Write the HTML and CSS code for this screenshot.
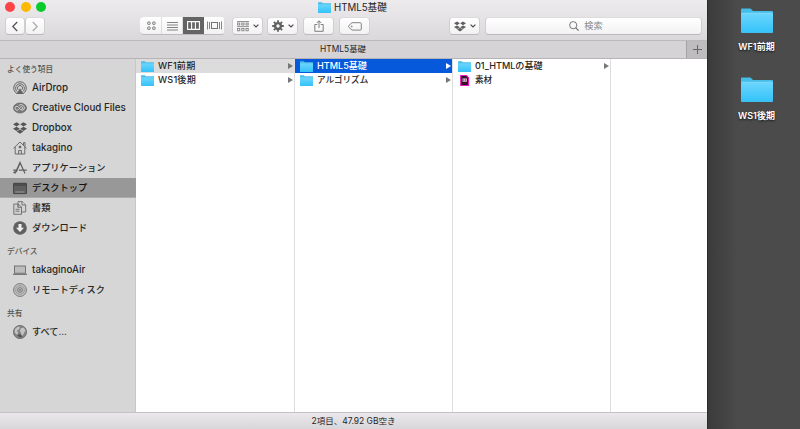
FILE: index.html
```html
<!DOCTYPE html>
<html lang="ja">
<head>
<meta charset="utf-8">
<title>HTML5基礎</title>
<link rel="stylesheet" href="styles.css">
</head>
<body>
<svg class="defs" width="0" height="0">
  <defs>
    <linearGradient id="blue" x1="0" y1="0" x2="0" y2="1"><stop offset="0" stop-color="#6ad5fc"/><stop offset="1" stop-color="#35c3fa"/></linearGradient>
    <symbol id="folder" viewBox="0 0 32 25" preserveAspectRatio="none"><path d="M0 24V1.5Q0 .5 1 .5H9.5L12 3H31Q32 3 32 4V24Q32 25 31 25H1Q0 25 0 24Z" fill="#45bde9"/><path d="M0 6H32V23.5Q32 24.3 31 24.3H1Q0 24.3 0 23.5Z" fill="url(#blue)"/><path d="M.3 5.3H31.7" stroke="#91e2ff" stroke-width=".9"/></symbol>
    <symbol id="dropbox" viewBox="0 0 14 12"><path d="M0 2.3 3.6.2 6.8 2.3 3.5 4.4ZM7.2 2.3 10.4.2 14 2.3 10.5 4.4ZM0 6.7 3.5 4.7 6.8 6.8 3.6 8.9ZM7.2 6.8 10.5 4.7 14 6.7 10.4 8.9ZM3.6 9.6 7 7.5 10.4 9.6 7 11.7Z"/></symbol>
    <symbol id="chev" viewBox="0 0 6 4"><path d="M.6.6 3 3 5.4.6" fill="none" stroke="#4c4c4c" stroke-width="1.2"/></symbol>
  </defs>
</svg>
<div class="desktop">
  <main class="window">
    <header class="toolbar">
      <div class="titlebar">
        <div class="lights"><i class="red"></i><i class="yellow"></i><i class="green"></i></div>
        <div class="title"><svg width="13" height="11"><use href="#folder"/></svg><span>HTML5基礎</span></div>
      </div>
      <div class="tools">
        <button class="btn nav"><svg width="8" height="11" viewBox="0 0 8 11"><path d="M6.2 1 1.8 5.5 6.2 10" fill="none" stroke="#505050" stroke-width="1.2"/></svg></button>
        <button class="btn nav forward"><svg width="8" height="11" viewBox="0 0 8 11"><path d="M1.8 1 6.2 5.5 1.8 10" fill="none" stroke="#aaa" stroke-width="1.2"/></svg></button>
        <div class="views">
          <span><svg width="9" height="10" viewBox="0 0 9 10" fill="none" stroke="#777" stroke-width="1"><rect x=".7" y="1" width="2.4" height="2.4" rx=".5"/><rect x="5.7" y="1" width="2.4" height="2.4" rx=".5"/><rect x=".7" y="6" width="2.4" height="2.4" rx=".5"/><rect x="5.7" y="6" width="2.4" height="2.4" rx=".5"/></svg></span>
          <span><svg width="11" height="10" viewBox="0 0 11 10"><path d="M0 1.5H11M0 4H11M0 6.5H11M0 9H11" stroke="#777" stroke-width=".9"/></svg></span>
          <span class="on"><svg width="13" height="9" viewBox="0 0 13 9"><path d="M.6.6H12.4V8.4H.6ZM4.6.6V8.4M8.4.6V8.4" fill="#666" stroke="#fff" stroke-width="1.1"/></svg></span>
          <span><svg width="15" height="9" viewBox="0 0 15 9" fill="none" stroke="#777"><rect x="4.5" y="1.5" width="6" height="6"/><path d="M.5.5V8.5M2.5 1V8M12.5 1V8M14.5.5V8.5" stroke-width=".9"/></svg></span>
        </div>
        <button class="btn menu arrange"><svg width="12" height="11" viewBox="0 0 12 11" fill="none" stroke="#777" stroke-width=".8"><path d="M0 .5H12M0 5.6H12"/><rect x=".6" y="2" width="2.2" height="2"/><rect x="4.8" y="2" width="2.2" height="2"/><rect x="9" y="2" width="2.2" height="2"/><rect x=".6" y="7.5" width="2.2" height="2.3"/><rect x="4.8" y="7.5" width="2.2" height="2.3"/><rect x="9" y="7.5" width="2.2" height="2.3"/></svg><svg width="6" height="4"><use href="#chev"/></svg></button>
        <button class="btn menu gear"><svg width="12" height="12" viewBox="0 0 12 12"><circle cx="6" cy="6" r="2.9" fill="none" stroke="#606060" stroke-width="2.4"/><path d="M6 .2V2.2M6 9.8V11.8M.2 6H2.2M9.8 6H11.8M1.9 1.9 3.3 3.3M8.7 8.7 10.1 10.1M1.9 10.1 3.3 8.7M8.7 3.3 10.1 1.9" stroke="#606060" stroke-width="1.8"/></svg><svg width="6" height="4"><use href="#chev"/></svg></button>
        <button class="btn menu share"><svg width="10" height="12" viewBox="0 0 10 12" fill="none" stroke="#707070" stroke-width=".9"><path d="M3.3 4.5H.8V11.3H9.2V4.5H6.7M5 8V.9M2.8 3 5 .8 7.2 3"/></svg></button>
        <button class="btn menu tag"><svg width="14" height="9" viewBox="0 0 14 9" fill="none" stroke="#777" stroke-width=".9"><path d="M4 .7H12.3Q13.3.7 13.3 1.7V7.1Q13.3 8.1 12.3 8.1H4L.8 5.2Q.3 4.4.8 3.6Z"/><circle cx="3.7" cy="4.4" r=".5"/></svg></button>
        <button class="btn menu drop"><svg width="12" height="11" fill="#606060"><use href="#dropbox"/></svg><svg width="6" height="4"><use href="#chev"/></svg></button>
        <div class="btn search"><svg width="10" height="10" viewBox="0 0 10 10" fill="none" stroke="#666"><circle cx="4.2" cy="4.2" r="3.6" stroke-width=".9"/><path d="M6.8 6.8 9.6 9.6" stroke-width="1.1"/></svg><span>検索</span></div>
      </div>
    </header>
    <div class="tabs"><div class="tab">HTML5基礎</div><div class="add"><svg width="9" height="9" viewBox="0 0 9 9"><path d="M4.5 0V9M0 4.5H9" stroke="#666"/></svg></div></div>
    <div class="body">
      <nav class="sidebar">
        <h2>よく使う項目</h2>
        <ul>
          <li><svg viewBox="0 0 14 14" fill="none" stroke="#626262"><path d="M4 12.6A6.3 6.3 0 1 1 10 12.6M4.2 10.6A4.4 4.4 0 1 1 9.8 10.6M5.2 8.8A2.5 2.5 0 1 1 8.8 8.8"/><path d="M7 7.2 10.6 13H3.4Z" fill="#626262" stroke="none"/></svg><span>AirDrop</span></li>
          <li><svg viewBox="0 0 14 14" fill="none" stroke="#555"><ellipse cx="7" cy="7" rx="6.5" ry="5" fill="#777" stroke="#606060" stroke-width=".7"/><path d="M5.8 8.5Q4 10 2.6 8.6T2.8 5.5Q4 4.7 5.4 6L7.4 8.5Q9.2 10 11 8.4T10.5 4.6Q8 2.4 5.7 4.4M6.8 6.6Q8.2 4.6 9.6 6.2T8.4 8" stroke="#e4e4e4" stroke-width=".8"/></svg><span>Creative Cloud Files</span></li>
          <li><svg fill="#565656"><use href="#dropbox" y="1" width="14" height="12"/></svg><span>Dropbox</span></li>
          <li><svg viewBox="0 0 14 14" fill="none" stroke="#606060" stroke-width=".9"><path d="M.5 7.3 7 1 13.5 7.3M2.2 6V13H11.8V6M10.5 4V1.6H12V5.5M5.6 13V9.5H8.4V13"/><circle cx="7" cy="6" r="1" fill="#606060"/></svg><span>takagino</span></li>
          <li class="jp"><svg viewBox="0 0 14 14" fill="none" stroke="#606060" stroke-width="1.2"><path d="M2 12.5 7 1.5 12 12.5M.2 9.2H4.8M6 9.2H13.8M7.1 2 3.2 11M.5 12 2.2 10.5"/></svg><span>アプリケーション</span></li>
          <li class="jp active"><svg viewBox="0 0 14 14"><rect x=".4" y="2.3" width="13.2" height="10.3" rx=".7" fill="#606060" stroke="#333" stroke-width=".8"/><path d="M1 4H13" stroke="#333" stroke-width=".8"/><path d="M2.5 11H11.5" stroke="#b8b8b8" stroke-dasharray="1.2 .7"/></svg><span>デスクトップ</span></li>
          <li class="jp"><svg viewBox="0 0 14 14" fill="#d2d2d2" stroke="#606060" stroke-width=".8"><path d="M5 .6H9L12.7 3.8V11H5Z"/><path d="M9 .6V4H12.7M.8 3H5L8.5 6V13.3H.8ZM4.8 3V6.3H8.5M2.5 8.3H6.5M2.5 10.2H6.5"/></svg><span>書類</span></li>
          <li class="jp"><svg viewBox="0 0 14 14"><circle cx="7" cy="7" r="6.8" fill="#606060"/><path d="M5.5 3H8.5V6.8H11L7 11 3 6.8H5.5Z" fill="#eee"/></svg><span>ダウンロード</span></li>
        </ul>
        <h2>デバイス</h2>
        <ul>
          <li><svg viewBox="0 0 14 14"><rect x="1.5" y="3" width="11" height="7.2" fill="#bcbcbc" stroke="#606060" stroke-width=".8"/><path d="M0 11.3H14" stroke="#606060" stroke-width="1"/></svg><span>takaginoAir</span></li>
          <li class="jp"><svg viewBox="0 0 14 14" fill="#bbb" stroke="#707070" stroke-width=".8"><circle cx="7" cy="7" r="6.5"/><circle cx="7" cy="7" r="4.4" stroke="#999"/><circle cx="7" cy="7" r="2.4"/><circle cx="7" cy="7" r=".8" fill="#eee"/></svg><span>リモートディスク</span></li>
        </ul>
        <h2>共有</h2>
        <ul><li class="jp"><svg viewBox="0 0 14 14"><circle cx="7" cy="7" r="6.6" fill="#858585" stroke="#5e5e5e" stroke-width=".7"/><path d="M2 4 5 1.4 7 2.5 5.6 4.8 3.8 5.5 5 7.4 4.3 10 1.7 7.5ZM8 3 11 2.8 12.5 6 11 7.5 10 10.5 8.5 10 8 7.5 6.8 6Z" fill="#c3c3c3"/><path d="M4 10 7 9 9.8 11.7 6.5 12.6Z" fill="#555"/></svg><span>すべて...</span></li></ul>
      </nav>
      <section class="columns">
        <div class="column">
          <div class="row trail"><svg class="f"><use href="#folder"/></svg><span class="wide">WF1前期</span><i class="tri"></i></div>
          <div class="row"><svg class="f"><use href="#folder"/></svg><span class="wide">WS1後期</span><i class="tri"></i></div>
        </div>
        <div class="column">
          <div class="row selected"><svg class="f"><use href="#folder"/></svg><span>HTML5基礎</span><i class="tri"></i></div>
          <div class="row"><svg class="f"><use href="#folder"/></svg><span class="kana">アルゴリズム</span><i class="tri"></i></div>
        </div>
        <div class="column">
          <div class="row"><svg class="f"><use href="#folder"/></svg><span>01_HTMLの基礎</span><i class="tri"></i></div>
          <div class="row"><svg class="f" viewBox="0 0 13 12"><path d="M2.4.6H8.6L11 3V11.4H2.4Z" fill="#351029" stroke="#ed13ba" stroke-width="1.2"/><path d="M4.4 3.8H9.1V7.3H4.4Z" fill="#f4d5ed"/><path d="M5.7 4.5V6.5M7.7 4.5V6.5" stroke="#5e174b" stroke-width=".8"/></svg><span class="kana">素材</span></div>
        </div>
        <div class="column"></div>
      </section>
    </div>
    <footer>2項目、47.92 GB空き</footer>
  </main>
  <aside>
    <div class="file"><svg width="32" height="25"><use href="#folder"/></svg><span>WF1前期</span></div>
    <div class="file"><svg width="32" height="25"><use href="#folder"/></svg><span>WS1後期</span></div>
  </aside>
</div>
</body>
</html>
```
FILE: styles.css
```css
* { box-sizing: border-box; }
body { margin: 0; overflow: hidden; font: 11px/14px Inter, "Noto Sans CJK JP", sans-serif; color: #262626; }
.defs { display: block; }
svg { flex: none; }
.desktop { display: flex; width: 800px; height: 429px; background: #4b4b4b; }
.window { width: 708px; height: 429px; display: flex; flex-direction: column; border-right: 1px solid #292b2c; background: #fff; }
.toolbar { height: 41px; background: linear-gradient(#edebee, #dad8db); border-bottom: 1px solid #bcb9bc; }
.titlebar { height: 17px; display: grid; grid-template-columns: 60px 1fr 60px; }
.lights { display: flex; gap: 5.5px; padding: 2px 0 0 5px; }
.lights i { width: 10px; height: 10px; border-radius: 50%; }
.red { background: #fc4547; }
.yellow { background: #fdb900; }
.green { background: #0acb2c; }
.title { display: flex; justify-content: center; gap: 3px; padding-right: 2px; line-height: 15px; font-size: 9.7px; }
.title svg { margin-top: 2px; }
.tools { display: flex; height: 18px; padding-left: 5px; }
.btn { display: flex; align-items: center; justify-content: center; height: 18px; padding: 0; border: 1px solid #d0ced0; border-top-color: #dddbdd; border-bottom-color: #bbb9bb; border-radius: 4px; background: linear-gradient(#fff, #f3f2f3); font: inherit; }
.nav { width: 20px; }
.forward { width: 20px; }
.views { display: grid; grid-template-columns: 22px 21px 21px 21px; width: 85px; margin-left: 95px; border-radius: 4px; background: linear-gradient(#fff, #f3f2f3); border-bottom: 1px solid #bbb9bb; overflow: hidden; }
.views span { display: flex; align-items: center; justify-content: center; border-right: 1px solid #dedcde; }
.views span:first-child { padding-left: 2px; }
.views .on { background: #646464; border-color: #646464; }
.menu { width: 31px; margin-left: 5px; gap: 4px; }
.arrange { margin-left: 7px; }
.gear { margin-left: 4px; }
.drop { margin-left: 79px; }
.search { width: 217px; margin-left: 5px; padding-right: 15px; gap: 5px; color: #888; font-size: 9.2px; }
.tabs { display: flex; height: 18px; border-bottom: 1px solid #b5b3b5; background: #d5d3d5; font-size: 8.4px; line-height: 17px; }
.tab { flex: 1; text-align: center; }
.add { width: 21px; display: flex; align-items: center; justify-content: center; background: #bebcbe; border-left: 1px solid #a4a2a4; }
.body { display: flex; height: 353px; }
.sidebar { width: 136px; background: #d5d6d5; box-shadow: inset -1px 0 #c6c7c6; }
h2 { margin: 0; padding: 3px 0 0 7px; font-size: 7.7px; line-height: 16px; font-weight: 500; color: #565656; }
h2:first-child { height: 19px; }
ul + h2 { height: 22px; padding-top: 6px; }
ul { margin: 0; padding: 0; list-style: none; }
li { display: flex; align-items: center; gap: 5px; height: 20px; padding-left: 13px; font-size: 9.8px; font-weight: 500; white-space: nowrap; }
li svg { width: 14px; height: 14px; }
.jp { font-size: 9.2px; }
.active { background: #979897; color: #111; box-shadow: inset 0 -1px #aaa; }
.columns { display: grid; flex: 1; grid-template-columns: 159px 158px 158px 1fr; }
.column { border-right: 1px solid #dededf; }
.column:last-child { border: 0; }
.row { display: flex; align-items: center; height: 14px; padding: 0 1px 0 5px; font-size: 9.1px; white-space: nowrap; font-weight: 500; }
.wide { letter-spacing: .2px; }
.kana { font-size: 8.6px; }
.f { width: 13px; height: 11px; margin-right: 4px; }
.tri { margin-left: auto; border-left: 5px solid #777; border-top: 3px solid transparent; border-bottom: 3px solid transparent; }
.trail { background: #dcdcdc; }
.selected { background: #0759dc; color: #fff; }
.selected .tri { border-left-color: #fff; }
footer { height: 17px; background: linear-gradient(#eae8eb, #d8d6d9); border-top: 1px solid #c3c1c4; font-size: 8.5px; line-height: 16px; text-align: center; }
aside { flex: 1; padding: 8px 0 0 5px; background: linear-gradient(90deg, #3b3b3b, #4b4b4b 30px); }
.file { display: flex; flex-direction: column; align-items: center; gap: 7px; height: 69px; color: #fff; font-size: 9px; font-weight: 600; text-shadow: 0 1px 2px #111; }
```
